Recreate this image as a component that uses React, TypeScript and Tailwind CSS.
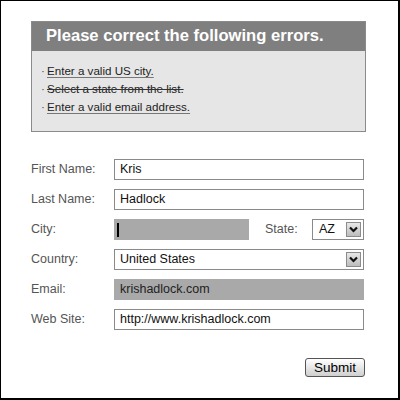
import React from "react";

function Arrow() {
  return (
    <span className="w-[15px] h-[15px] border border-[#8c8c8c] bg-gradient-to-b from-[#e8e8e8] to-[#bdbdbd] flex items-center justify-center">
      <svg width="11" height="11" viewBox="0 0 11 11">
        <polyline points="2,3.5 5.5,7 9,3.5" fill="none" stroke="#111" strokeWidth="2.2" />
      </svg>
    </span>
  );
}

function Row({ label, children }: { label: string; children: React.ReactNode }) {
  return (
    <div className="flex items-center h-[21px]">
      <span className="w-[83px] text-[12.5px] text-[#555]">{label}</span>
      {children}
    </div>
  );
}

export default function App() {
  const errors = [
    { text: "Enter a valid US city.", strike: false },
    { text: "Select a state from the list.", strike: true },
    { text: "Enter a valid email address.", strike: false },
  ];

  return (
    <div
      className="w-[400px] h-[400px] bg-white border-l border-t border-r-2 border-b-2 border-black pl-[30px] pt-5"
      style={{ fontFamily: '"Liberation Sans", Arial, sans-serif' }}
    >
      {/* Error summary */}
      <div className="w-[335px] h-[111px] border border-[#8a8a8a] bg-[#e6e6e6]">
        <div className="h-[29px] bg-[#7f7f7f] flex items-center pl-[14px]">
          <h1 className="text-white font-bold text-[16.6px]">Please correct the following errors.</h1>
        </div>
        <ul className="pt-[11px] pl-[9px] text-[11.6px] leading-[18px] text-[#222]">
          {errors.map((e) => (
            <li key={e.text} className="flex">
              <span className="w-[6px] text-[#555]">·</span>
              <span
                className={
                  e.strike
                    ? "line-through decoration-[#333]"
                    : "underline decoration-[#777] underline-offset-2"
                }
              >
                {e.text}
              </span>
            </li>
          ))}
        </ul>
      </div>

      {/* Form */}
      <div className="mt-[27px] w-[335px] flex flex-col gap-[9px] text-[12.5px] text-[#111]">
        <Row label="First Name:">
          <div className="w-[250px] h-[21px] border border-[#8a8a8a] pl-[5px] flex items-center">Kris</div>
        </Row>
        <Row label="Last Name:">
          <div className="w-[250px] h-[21px] border border-[#8a8a8a] pl-[5px] flex items-center">Hadlock</div>
        </Row>
        <Row label="City:">
          <div className="w-[135px] h-[21px] bg-[#a9a9a9] pl-[3px] flex items-center">
            <span className="w-[2px] h-[14px] bg-black" />
          </div>
          <span className="ml-[16px] w-[47px] text-[#555]">State:</span>
          <div className="w-[52px] h-[21px] border border-[#8a8a8a] pl-[6px] pr-[2px] flex items-center justify-between">
            <span>AZ</span>
            <Arrow />
          </div>
        </Row>
        <Row label="Country:">
          <div className="w-[250px] h-[21px] border border-[#8a8a8a] pl-[5px] pr-[2px] flex items-center justify-between">
            <span>United States</span>
            <Arrow />
          </div>
        </Row>
        <Row label="Email:">
          <div className="w-[250px] h-[21px] bg-[#a9a9a9] pl-[6px] flex items-center text-[#222]">krishadlock.com</div>
        </Row>
        <Row label="Web Site:">
          <div className="w-[250px] h-[21px] border border-[#8a8a8a] pl-[5px] flex items-center">http://www.krishadlock.com</div>
        </Row>
        <div className="flex justify-end mt-[19px]">
          <button className="w-[60px] h-[19px] mr-[1px] rounded-[3px] border border-[#555] bg-gradient-to-b from-white to-[#cfcfcf] text-[13.5px] text-black leading-none">
            Submit
          </button>
        </div>
      </div>
    </div>
  );
}
